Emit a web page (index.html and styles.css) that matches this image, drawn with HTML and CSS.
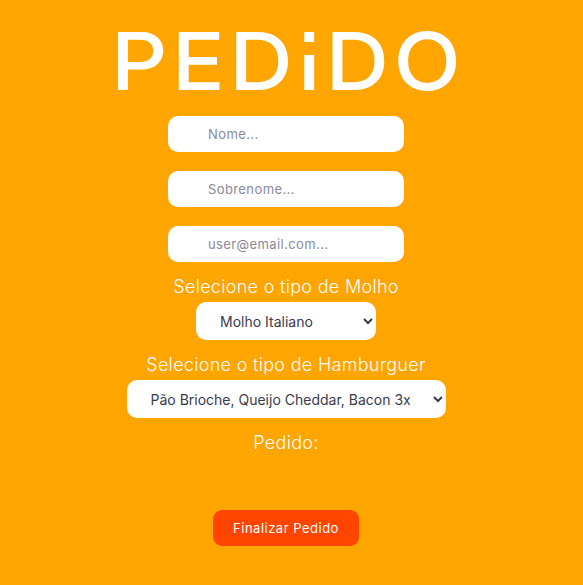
FILE: index.html
```html
<!DOCTYPE html>
<html lang="pt-BR">
<head>
<meta charset="utf-8">
<title>Pedido</title>
<link rel="stylesheet" href="styles.css">
</head>
<body>
<main class="page">
  <h1 class="logo">PED<span class="logo-i">I</span>DO</h1>
  <form class="form">
    <input class="field" type="text" placeholder="Nome...">
    <input class="field" type="text" placeholder="Sobrenome...">
    <input class="field" type="email" placeholder="user@email.com...">
    <label class="label">Selecione o tipo de Molho</label>
    <select class="select select-molho">
      <option>Molho Italiano</option>
    </select>
    <label class="label">Selecione o tipo de Hamburguer</label>
    <select class="select select-burger">
      <option>Pão Brioche, Queijo Cheddar, Bacon 3x</option>
    </select>
    <p class="pedido">Pedido:</p>
    <button class="btn" type="button">Finalizar Pedido</button>
  </form>
</main>
</body>
</html>
```
FILE: styles.css
```css
html, body {
  margin: 0;
  padding: 0;
  background: #ffa500;
}
body {
  font-family: "Inter", "Noto Sans", sans-serif;
  color: #fff;
}
.page {
  display: flex;
  flex-direction: column;
  align-items: center;
  padding: 18px 11px 0 0;
}
.logo {
  margin: 0 -4px 0 0;
  font-family: "Inter", sans-serif;
  font-weight: 500;
  font-size: 80px;
  line-height: 86px;
  letter-spacing: 4px;
  color: #fff;
  transform: scaleX(1.1);
}
.logo-i {
  position: relative;
}
.logo-i::after {
  content: "";
  position: absolute;
  left: -3px;
  right: 0;
  top: 30px;
  height: 13px;
  background: #ffa500;
}
.form {
  display: flex;
  flex-direction: column;
  align-items: center;
  margin-top: 12px;
}
.field {
  box-sizing: border-box;
  width: 236px;
  height: 36px;
  margin-bottom: 19px;
  border: none;
  border-radius: 10px;
  background: #fff;
  padding: 0 0 0 40px;
  font-family: "Inter", sans-serif;
  font-size: 13px;
  letter-spacing: 0.4px;
  color: #333;
  outline: none;
}
.field:last-of-type {
  margin-bottom: 0;
}
.field::placeholder {
  color: #8a8a99;
}
.label {
  margin-top: 15px;
  font-size: 18px;
  font-weight: 300;
  letter-spacing: 0.3px;
  line-height: 20px;
  color: #fff;
}
.select {
  box-sizing: border-box;
  height: 38px;
  margin-top: 5px;
  border: none;
  border-radius: 10px;
  background-color: #fff;
  font-family: "Inter", sans-serif;
  font-size: 14px;
  color: #3a3a4a;
  padding: 0 4px 0 20px;
  outline: none;
}
.select-molho {
  width: 180px;
}
.select-burger {
  width: 319px;
}
.pedido {
  margin: 15px 0 0;
  font-size: 18px;
  font-weight: 300;
  letter-spacing: 0.3px;
  line-height: 20px;
}
.btn {
  margin-top: 57px;
  width: 146px;
  height: 36px;
  border: none;
  border-radius: 9px;
  background: #ff4500;
  color: #fff;
  font-family: "Inter", sans-serif;
  font-size: 13px;
  letter-spacing: 0.5px;
}
```
